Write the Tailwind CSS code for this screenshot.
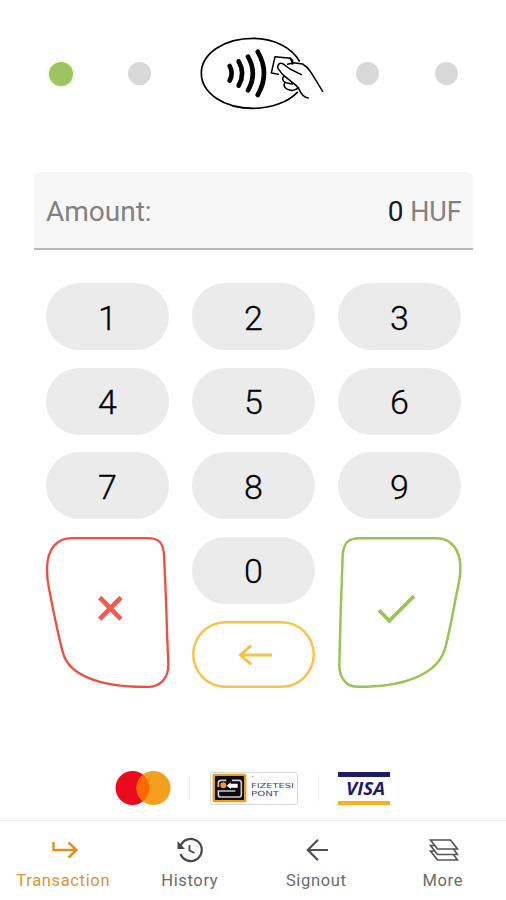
<!DOCTYPE html>
<html lang="en">
<head>
    <meta charset="UTF-8">
    <meta name="viewport" content="width=device-width, initial-scale=1.0">
    <title>Payment</title>
    <script src="https://cdn.jsdelivr.net/npm/@tailwindcss/browser@4"></script>
</head>
<body class="h-screen flex flex-col overflow-hidden bg-white font-['Roboto',sans-serif] text-[#1c1c1c]">

    <!-- Progress -->
    <header class="h-[172px] shrink-0 flex items-start pl-[49px] pt-[25px]">
        <div class="mt-[37px] size-6 rounded-full bg-[#9cc460] shadow-[0_0_4px_#d5f59a]"></div>
        <div class="mt-[37px] ml-[55px] size-[23px] rounded-full bg-[#d8d8d8]"></div>
        <svg class="ml-[39px] h-[95px] w-[150px] shrink-0" viewBox="0 0 450 285" fill="none" stroke="#000" stroke-linecap="round" stroke-linejoin="round">
            <path stroke-width="5" d="M328 108C305 68 253 40 190 40C101 40 34 86 34 145C34 204 101 250 190 250C246 250 295 230 322 202"/>
            <g stroke-width="14">
                <path d="M119 123Q131 145 119 167"/>
                <path d="M146 109Q167 145 146 182"/>
                <path d="M174 95Q203 145 174 196"/>
                <path d="M203 80Q241 145 203 210"/>
            </g>
            <path fill="#fff" stroke="none" d="M254 94L302 98L312 114L340 117L398 199L355 219L326 195L283 192L280 152L244 145Z"/>
            <g stroke-width="4.500">
                <path d="M265 148L244 144L255 95L301 100L309 116"/>
                <path d="M299 99L308 106L306 117"/>
                <path d="M334 149L300 132L278 116C269 112 261 119 264 130L278 149L318 181L326 191C333 207 343 218 355 219"/>
                <path d="M293 118L310 113L338 117Q352 125 363 142L398 199"/>
                <path d="M283 153C274 160 278 170 288 173L307 177"/>
                <path d="M284 174C278 185 288 194 302 196C312 198 319 194 326 188"/>
            </g>
        </svg>
        <div class="mt-[37px] ml-4 size-[23px] rounded-full bg-[#d8d8d8]"></div>
        <div class="mt-[37px] ml-[56px] size-[23px] rounded-full bg-[#d8d8d8]"></div>
    </header>

    <!-- Amount -->
    <div class="ml-[34px] flex h-[78px] w-[439px] shrink-0 items-center rounded-t-md border-b-2 border-[#b9b9b9] bg-[#f7f7f7] pt-1 pr-[11px] pl-3 text-[28px] text-[#828282]">
        <span>Amount:</span>
        <span class="ml-auto text-[#1c1c1c]">0</span>
        <span class="ml-[5px] origin-right scale-x-[0.96]">HUF</span>
    </div>

    <!-- Keypad -->
    <main class="mt-[33px] ml-[46px] grid w-[415px] shrink-0 grid-cols-3 grid-rows-[repeat(5,67px)] gap-x-[23px] gap-y-[17.5px] text-[34px] font-light text-black">
        <button class="rounded-full bg-[#ebebeb] pt-[3px] [-webkit-text-stroke:0.3px_black]">1</button>
        <button class="rounded-full bg-[#ebebeb] pt-[3px] [-webkit-text-stroke:0.3px_black]">2</button>
        <button class="rounded-full bg-[#ebebeb] pt-[3px] [-webkit-text-stroke:0.3px_black]">3</button>
        <button class="rounded-full bg-[#ebebeb] pt-[3px] [-webkit-text-stroke:0.3px_black]">4</button>
        <button class="rounded-full bg-[#ebebeb] pt-[3px] [-webkit-text-stroke:0.3px_black]">5</button>
        <button class="rounded-full bg-[#ebebeb] pt-[3px] [-webkit-text-stroke:0.3px_black]">6</button>
        <button class="rounded-full bg-[#ebebeb] pt-[3px] [-webkit-text-stroke:0.3px_black]">7</button>
        <button class="rounded-full bg-[#ebebeb] pt-[3px] [-webkit-text-stroke:0.3px_black]">8</button>
        <button class="rounded-full bg-[#ebebeb] pt-[3px] [-webkit-text-stroke:0.3px_black]">9</button>
        <button class="row-span-2" aria-label="Cancel">
            <svg class="h-[151.5px] w-[123px] overflow-visible" viewBox="33 34.5 369 454.5" fill="none">
                <path stroke="#ee4f40" stroke-width="7" d="M110 38H335C372 38 384 50 387 88C390 150 394 240 396 320L400 415C401 455 378 484 342 484C270 485 205 476 160 457C120 440 95 417 86 388C72 345 60 280 42 190C37 165 35 155 36 125C38 70 66 38 110 38Z"/>
                <path stroke="#f35a50" stroke-width="14" d="M194 216L258 281M258 216L194 281"/>
            </svg>
        </button>
        <button class="rounded-full bg-[#ebebeb] pt-[3px] [-webkit-text-stroke:0.3px_black]">0</button>
        <button class="row-span-2" aria-label="Confirm">
            <svg class="h-[151.5px] w-[123px] overflow-visible" viewBox="24 34.5 369 454.5" fill="none">
                <path stroke="#98c455" stroke-width="7.500" d="M90 38H320C362 38 389 70 391 122C392 150 389 160 386 175C370 250 359 320 345 370C329 420 290 444 245 461C200 478 150 484 85 484C50 484 28 460 28 418C30 320 34 190 38 90C41 50 55 38 90 38Z"/>
                <path stroke="#98c455" stroke-width="11" d="M147 254L178 286L252 212"/>
            </svg>
        </button>
        <button class="flex items-center justify-center rounded-full shadow-[inset_0_0_0_2.5px_#f9c349]" aria-label="Backspace">
            <svg class="ml-[2px] h-[22px] w-[36px]" viewBox="0 0 36 22" fill="none" stroke="#f8c044" stroke-width="3">
                <path d="M35 11H3M14 1.500L3.500 11L14 20.500"/>
            </svg>
        </button>
    </main>

    <!-- Accepted cards -->
    <div class="mt-[82px] ml-[115px] flex h-9 shrink-0 items-center">
        <svg class="h-[34px] w-[56px]" viewBox="0 0 56 34">
            <circle cx="17.500" cy="17" r="17" fill="#eb0a1e"/>
            <circle cx="38.500" cy="17" r="17" fill="#f4a01c"/>
            <path fill="#ff6700" d="M28 3.630A17 17 0 0 1 28 30.370A17 17 0 0 1 28 3.630Z"/>
        </svg>
        <div class="ml-[18px] h-[26px] w-px bg-[#f0f0f0]"></div>
        <div class="ml-5 flex h-[33px] w-[88px] items-center rounded-[3px] border border-[#d9d9d9] bg-white pl-px">
            <svg class="h-[30px] w-[35px] shrink-0" viewBox="0 0 105 90" fill="none">
                <rect x="2" y="2" width="101" height="86" rx="5" fill="#e89b20"/>
                <rect x="9" y="9" width="87" height="72" rx="2" fill="#0b0b0b"/>
                <path stroke="#c9ced2" stroke-width="5" d="M60 22H82Q88 22 88 30V65Q88 72 80 72H27Q19 72 19 65V54H70M19 42V29Q19 22 27 22H43"/>
                <circle cx="34" cy="37" r="9" fill="#f49a27"/>
                <path fill="#fff" d="M44 38L56 28V32H77V44H56V48Z"/>
            </svg>
            <svg class="ml-1 h-[31px] w-[45px]" viewBox="0 0 45 31" fill="#4a4a4a" font-family="DejaVu Sans" font-size="7">
                <circle cx="1.500" cy="3.500" r="0.800" fill="#999"/>
                <text x="0" y="14.500" textLength="43" lengthAdjust="spacingAndGlyphs">FIZETESI</text>
                <text x="0" y="22.800" textLength="28" lengthAdjust="spacingAndGlyphs">PONT</text>
            </svg>
        </div>
        <div class="ml-5 h-[26px] w-px bg-[#f0f0f0]"></div>
        <div class="ml-[19px] flex h-[33px] w-[52px] flex-col justify-center border-t-[5px] border-b-[4px] border-t-[#1e1b69] border-b-[#f4b316]">
            <svg class="h-[23px] w-[52px]" viewBox="0 0 52 23" fill="#1e1b69" font-family="Open Sans" font-size="18" font-weight="700" font-style="italic">
                <text x="8" y="18" textLength="39" lengthAdjust="spacingAndGlyphs">VISA</text>
            </svg>
        </div>
    </div>

    <!-- Bottom navigation -->
    <nav class="mt-auto grid h-[80px] shrink-0 grid-cols-4 border-t border-[#ededed] text-center text-[16.5px] leading-5 tracking-[0.65px] text-[#6b6b6b]">
        <a class="flex flex-col items-center pt-4 text-[#dc9431]">
            <svg class="ml-[3px] h-[26px] w-[28px]" viewBox="0 0 28 26" fill="none" stroke="#df8f20" stroke-width="2.400">
                <path d="M2.500 5V13H26M17.500 5.500L25.500 13L17.500 20.500"/>
            </svg>
            <span class="mt-2">Transaction</span>
        </a>
        <a class="flex flex-col items-center pt-4">
            <svg class="h-[26px] w-[28px]" viewBox="0 0 28 26" fill="none" stroke="#484848" stroke-width="2.200">
                <path d="M4.500 9A11 11 0 1 1 4.500 17"/>
                <path fill="#484848" stroke="none" d="M1.500 4V12H9Z"/>
                <path stroke-width="1.800" d="M13.500 8V13.500L18.500 16"/>
            </svg>
            <span class="mt-2">History</span>
        </a>
        <a class="flex flex-col items-center pt-4">
            <svg class="ml-[2px] h-[26px] w-[24px]" viewBox="0 0 24 26" fill="none" stroke="#505050" stroke-width="2.200">
                <path d="M23 13H2.500M13 2.800L2.800 13L13 23.200"/>
            </svg>
            <span class="mt-2">Signout</span>
        </a>
        <a class="flex flex-col items-center pt-4">
            <svg class="ml-[3px] h-[26px] w-[30px]" viewBox="0 0 30 26" fill="#fff" stroke="#555" stroke-width="1.700">
                <path d="M1.500 14H22L28.500 23H8.500Z"/>
                <path d="M1.500 8.500H22L28.500 17.500H8.500Z"/>
                <path d="M1.500 3H21.500L28.500 12H8.500Z"/>
            </svg>
            <span class="mt-2">More</span>
        </a>
    </nav>

</body>
</html>
